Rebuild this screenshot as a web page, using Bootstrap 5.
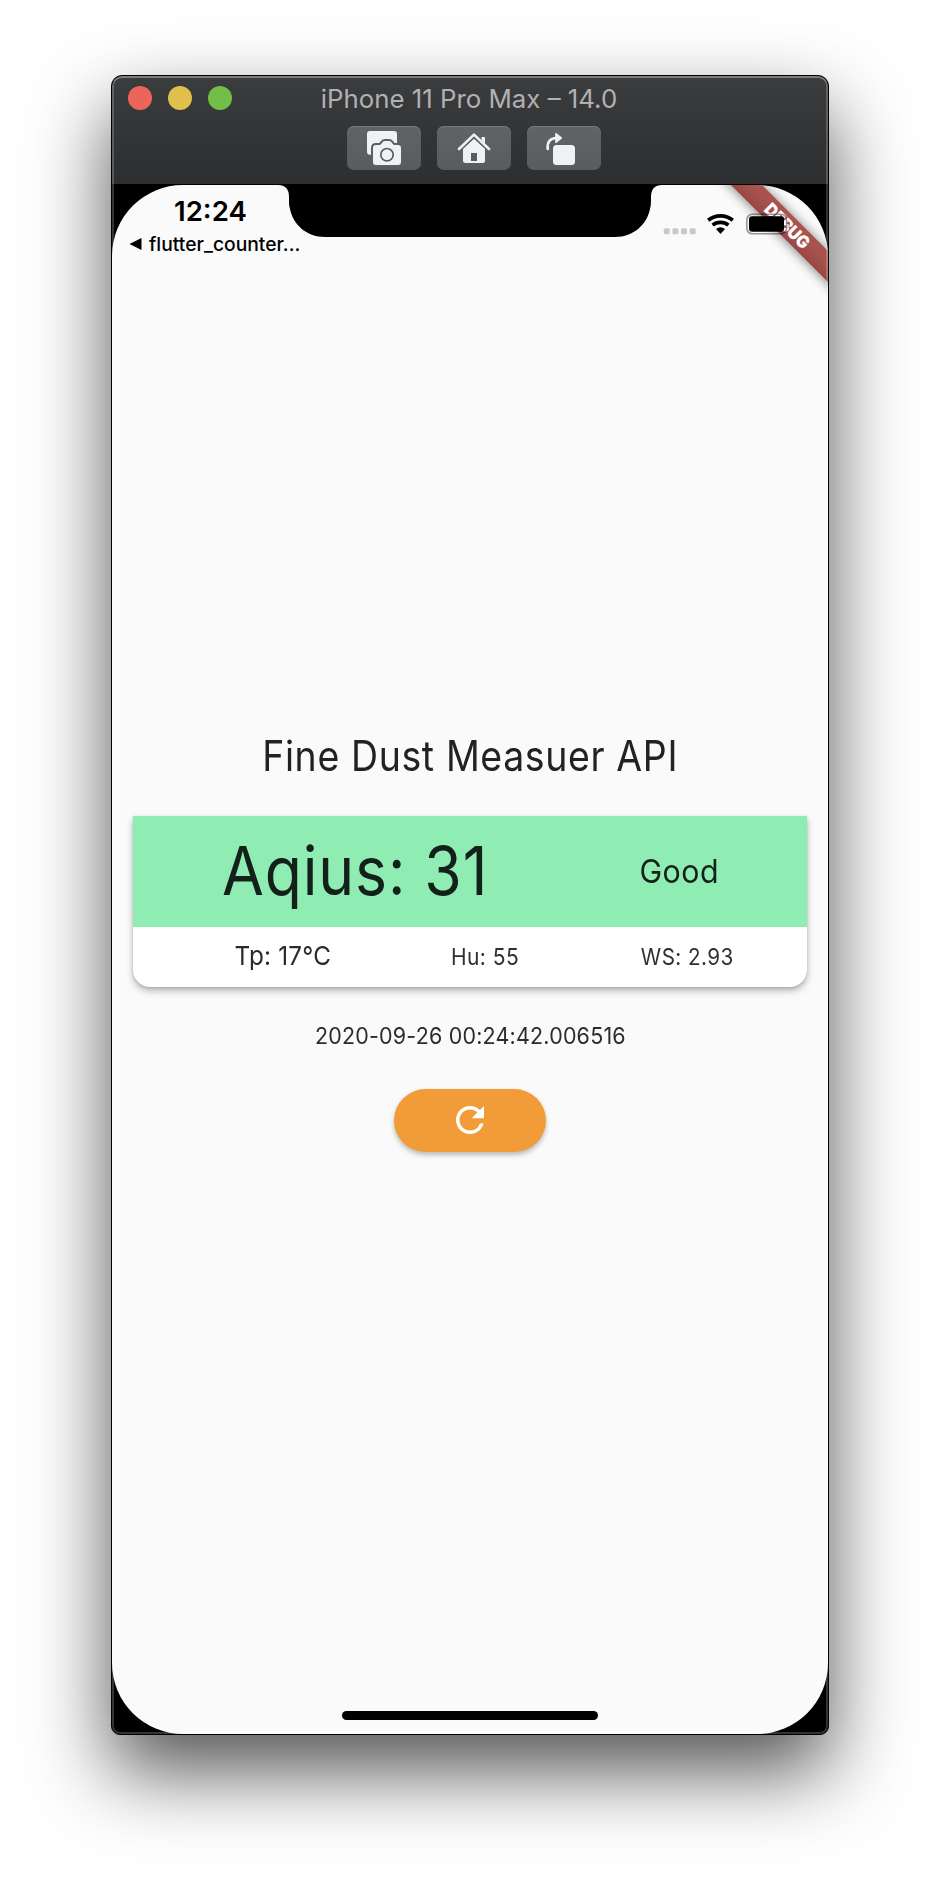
<!DOCTYPE html>
<html lang="en">
<head>
<meta charset="utf-8">
<meta name="viewport" content="width=device-width, initial-scale=1">
<title>Fine Dust Measuer API</title>
<link href="https://cdn.jsdelivr.net/npm/bootstrap@5.3.0/dist/css/bootstrap.min.css" rel="stylesheet">
<style>
  body { background: #fff; font-family: Inter, Roboto, sans-serif; min-height: 1882px; padding-top: 75px; }
  .simulator { width: 718px; height: 1660px; background: #000; border: 1px solid #000; border-radius: 11px 11px 9px 9px; box-shadow: 0 36px 80px rgba(0,0,0,.68); overflow: hidden; }
  .frame-light { inset: 0; border-radius: 10px 10px 8px 8px; box-shadow: inset 0 2px 0 rgba(255,255,255,.17), inset 0 0 0 2px rgba(255,255,255,.2); z-index: 5; pointer-events: none; }
  .titlebar { height: 108px; background: linear-gradient(#3b3c3e, #2d2e30); }
  .lights { left: 16px; top: 10px; gap: 16px; }
  .lights i { width: 24px; height: 24px; border-radius: 50%; }
  .window-title { font-size: 25.8px; line-height: 46px; color: #b1b1b2; padding-right: 2px; }
  .tool { width: 74px; height: 44px; border-radius: 7px; background: linear-gradient(#626365, #5a5b5d); box-shadow: inset 0 1px 0 #78797b; padding: 0; border: 0; }
  .tool svg, .status-icons, .ribbon, .notch { display: block; }
  .tools { gap: 16px; padding: 4px 0 0 8px; }
  .phone { height: 1549px; margin-top: 1px; background: #fafafa; border-radius: 71px; color: #222; }
  .notch { left: 165px; top: -1px; }
  .ribbon { right: 0; top: 0; }
  .status { height: 90px; }
  .clock { left: 62px; top: 12px; font-size: 27.6px; font-weight: 600; line-height: 29px; color: #000; }
  .back { left: 17px; top: 47px; gap: 7px; font-size: 19.300px; font-weight: 500; line-height: 24px; color: #000; }
  .status-icons { left: 548px; top: 23px; z-index: 2; }
  .sq { display: inline-block; white-space: nowrap; }
  .headline { margin-top: 451px; font-size: 42px; line-height: 60px; letter-spacing: .7px; }
  .headline .sq { transform: scaleX(.892); }
  .air { width: 674px; margin-top: 30px; border: 0; border-radius: 0 0 17px 17px; background: #fff; box-shadow: 0 4px 7px rgba(0,0,0,.26), 0 1px 3px rgba(0,0,0,.14); }
  .air-top { height: 111px; background: #8fedb4; color: #13211a; }
  .air-top > div:first-child { width: 444px; font-size: 67px; letter-spacing: 1px; }
  .air-top > div:last-child { width: 204px; font-size: 33px; letter-spacing: .5px; }
  .air-bottom { height: 60px; padding-left: 67px; font-size: 22.8px; letter-spacing: .5px; color: #303030; }
  .temp { width: 165px; font-size: 26px; line-height: 38px; letter-spacing: .2px; color: #2a2a2a; padding-bottom: 2px; }
  .hum { width: 240px; }
  .wind { width: 164px; }
  .s90 { transform: scaleX(.905); }
  .s92 { transform: scaleX(.92); }
  .s93 { transform: scaleX(.934); }
  .stamp { margin-top: 34px; font-size: 23px; line-height: 30px; letter-spacing: .2px; color: #2c2c2c; }
  .reload { width: 152px; height: 63px; margin-top: 38px; background: #f19c38; border: 0; box-shadow: 0 3px 5px rgba(0,0,0,.26); }
  .reload svg { margin-top: -1px; }
  .home-bar { width: 256px; height: 9px; background: #000; margin-bottom: 14px; }
</style>
</head>
<body>
<main class="simulator position-relative mx-auto">
  <header class="titlebar position-relative">
    <div class="lights position-absolute d-flex">
      <i style="background:#ed655a"></i><i style="background:#e0c04c"></i><i style="background:#72be47"></i>
    </div>
    <div class="window-title text-center">iPhone 11 Pro Max – 14.0</div>
    <div class="tools d-flex justify-content-center">
      <button class="tool" aria-label="Screenshot">
        <svg width="74" height="44" fill="#f0f1f4">
          <path d="M23 5H47q3 0 3 3V26H26V28.700H23q-3 0-3-3V8q0-3 3-3z"/>
          <path d="M29 19h3.200q1.300 0 2-1l1.300-1.700q1-1.300 2.500-1.300h4q1.500 0 2.500 1.300l1.300 1.700q.7 1 2 1H51q3 0 3 3V36q0 3-3 3H29q-3 0-3-3V22q0-3 3-3z" stroke="#5e5f61" stroke-width="4" paint-order="stroke"/>
          <circle cx="40" cy="28.700" r="6.200" fill="none" stroke="#5b5c5e" stroke-width="1.700"/>
        </svg>
      </button>
      <button class="tool" aria-label="Home">
        <svg width="74" height="44" fill="#f0f1f4">
          <path d="M37 14.800 48 25.300V34.500q0 2.500-2.500 2.500H28.500Q26 37 26 34.500V25.300L37 14.800z"/>
          <path d="M26 22.500 37 12.500 48 22.500V26H26z"/>
          <path d="M22.500 24.800 37 11.200 51.500 24.800" fill="none" stroke="#5e5f61" stroke-width="2"/>
          <path d="M44.500 14V11.800q0-.8.8-.8H47.200q.8 0 .8.8V18z"/>
          <path d="M22 23 37 8.600 52 23" fill="none" stroke="#f0f1f4" stroke-width="2.600" stroke-linecap="round" stroke-linejoin="round"/>
          <path d="M34 27h6v8h-6z" fill="#5a5b5d"/>
        </svg>
      </button>
      <button class="tool" aria-label="Rotate">
        <svg width="74" height="44" fill="#f0f1f4">
          <rect x="26" y="19" width="22" height="20" rx="3.500"/>
          <path d="M20.800 23Q19.500 12.500 29.500 12" fill="none" stroke="#f0f1f4" stroke-width="2.700" stroke-linecap="round"/>
          <path d="M28.500 7.800q0-.9.800-.4l5.300 4.200q.5.400 0 .8l-5.300 4.200q-.8.500-.8-.4z" stroke="#f0f1f4" stroke-width=".8"/>
        </svg>
      </button>
    </div>
  </header>

  <section class="phone position-relative overflow-hidden d-flex flex-column align-items-center">
    <svg class="notch position-absolute" width="386" height="54"><path d="M1 0V1Q12 1 12 13C12 20 12 21 13 25C16 40 29 53 48 53H338C357 53 370 40 373 25C374 21 374 20 374 13Q374 1 385 1V0z"/></svg>
    <svg class="ribbon position-absolute" width="130" height="130" viewBox="0 0 130 130">
      <defs>
        <linearGradient id="band" gradientUnits="userSpaceOnUse" x1="71" y1="59" x2="92" y2="38"><stop offset="0" stop-color="#a9534f"/><stop offset=".5" stop-color="#9a4743"/><stop offset="1" stop-color="#a9534f"/></linearGradient>
        <filter id="soft" x="-30%" y="-30%" width="160%" height="160%"><feGaussianBlur stdDeviation="6"/></filter>
      </defs>
      <path d="M12-20 43-20 150 87V118z" opacity=".5" filter="url(#soft)"/>
      <path d="M13-20H44L150 86V117z" fill="url(#band)"/>
      <text transform="translate(89 41) rotate(45)" y="6" text-anchor="middle" font-family="Inter" font-size="17.500" font-weight="900" fill="#fff" textLength="56" lengthAdjust="spacingAndGlyphs">DEBUG</text>
    </svg>
    <div class="status w-100">
      <span class="clock position-absolute">12:24</span>
      <div class="back position-absolute d-flex align-items-center">
        <svg width="13" height="14"><path d="M.5 7 12.500 1V13z"/></svg><span>flutter_counter...</span>
      </div>
      <svg class="status-icons position-absolute" width="140" height="30">
        <g fill="#c9c9c9"><rect x="3.700" y="20.300" width="6" height="6" rx="1.500"/><rect x="12.400" y="20.300" width="6" height="6" rx="1.500"/><rect x="21" y="20.300" width="6" height="6" rx="1.500"/><rect x="29.700" y="20.300" width="6" height="6" rx="1.500"/></g>
        <g fill="none" stroke="#000" stroke-width="3.700"><path d="M48.200 12.200A19.500 19.500 0 0 1 72.800 12.200"/><path d="M52.600 17.200A12.300 12.300 0 0 1 68.400 17.200"/></g>
        <path d="M56 21q4.500-3.500 9 0l-4.500 5z"/>
        <rect x="86.800" y="6.200" width="39.800" height="19.600" rx="5.500" fill="none" stroke="#000" stroke-opacity=".4" stroke-width="1.600"/>
        <rect x="89" y="8.300" width="35" height="15.400" rx="3.300"/>
        <path d="M128.500 12.500q3 3.500 0 7z" fill-opacity=".4"/>
      </svg>
    </div>

    <h1 class="headline mb-0 fw-normal"><span class="sq">Fine Dust Measuer API</span></h1>
    <div class="card air">
      <div class="air-top d-flex align-items-center text-center">
        <div><span class="sq s90">Aqius: 31</span></div>
        <div><span class="sq s92">Good</span></div>
      </div>
      <div class="air-bottom d-flex align-items-center text-center">
        <div class="temp"><span class="sq s93">Tp: 17°C</span></div>
        <div class="hum"><span class="sq s92">Hu: 55</span></div>
        <div class="wind"><span class="sq s90">WS: 2.93</span></div>
      </div>
    </div>
    <div class="stamp"><span class="sq s93">2020-09-26 00:24:42.006516</span></div>
    <button class="btn reload rounded-pill d-flex align-items-center justify-content-center p-0" aria-label="Refresh">
      <svg width="42" height="42" viewBox="0 0 24 24" fill="#fff"><path d="M17.650 6.350A7.958 7.958 0 0 0 12 4c-4.420 0-7.990 3.580-7.990 8s3.570 8 7.990 8c3.730 0 6.840-2.550 7.730-6h-2.080A5.990 5.990 0 0 1 12 18c-3.310 0-6-2.690-6-6s2.690-6 6-6c1.660 0 3.140.69 4.220 1.780L13 11h7V4l-2.350 2.350z"/></svg>
    </button>
    <div class="home-bar rounded-pill mt-auto"></div>
  </section>
  <div class="frame-light position-absolute"></div>
</main>
<script src="https://cdn.jsdelivr.net/npm/bootstrap@5.3.0/dist/js/bootstrap.bundle.min.js"></script>
</body>
</html>
